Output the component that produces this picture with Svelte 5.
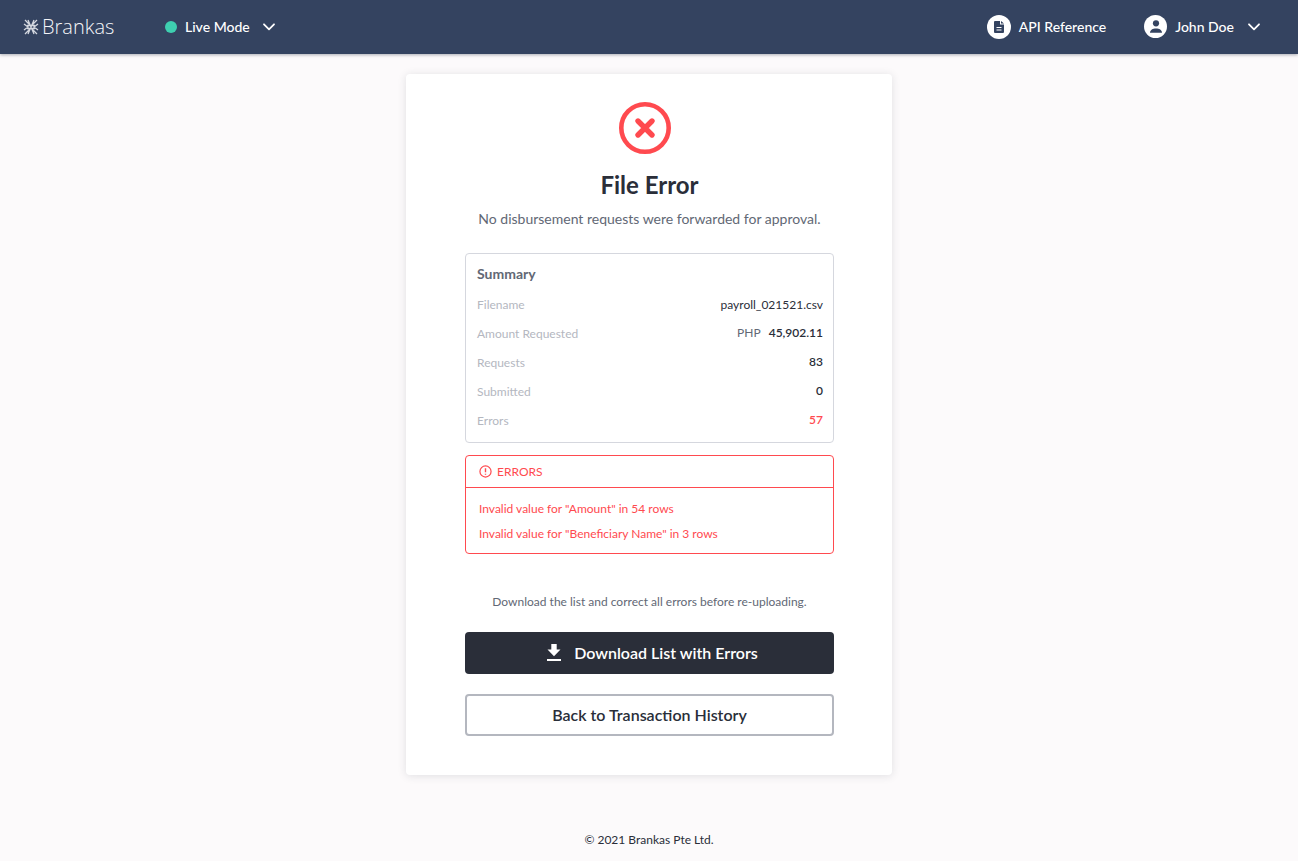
<script>
  const rows = [
    { label: 'Filename', value: 'payroll_021521.csv', kind: 'plain' },
    { label: 'Amount Requested', value: '45,902.11', prefix: 'PHP', kind: 'bold' },
    { label: 'Requests', value: '83', kind: 'bold' },
    { label: 'Submitted', value: '0', kind: 'bold' },
    { label: 'Errors', value: '57', kind: 'bad' }
  ];
  const errors = [
    'Invalid value for "Amount" in 54 rows',
    'Invalid value for "Beneficiary Name" in 3 rows'
  ];
</script>

<header class="topbar">
  <div class="logo">
    <svg width="16" height="16" viewBox="0 0 16 16" fill="none" stroke="#d3d7df" stroke-width="1.3">
      <path d="M2 1l6 6 6-6M2 15l6-6 6 6M1 5l4 3-4 3M15 5l-4 3 4 3M5 1l6 14M11 1L5 15M4 6.500h8M4 9.500h8" />
    </svg>
    <span>Brankas</span>
  </div>
  <div class="mode">
    <span class="dot"></span>
    <span>Live Mode</span>
    <svg class="chev" width="12" height="8" viewBox="0 0 12 8" fill="none" stroke="#fff" stroke-width="1.8" stroke-linecap="round" stroke-linejoin="round"><path d="M1 1.3l5 5 5-5" /></svg>
  </div>
  <div class="spacer"></div>
  <div class="api">
    <span class="round">
      <svg width="10" height="12" viewBox="0 0 10 12"><path fill="#344360" fill-rule="evenodd" d="M1 0H6V3.500H10V11A1 1 0 0 1 9 12H1A1 1 0 0 1 0 11V1A1 1 0 0 1 1 0ZM2.500 6v1h5V6ZM2.500 8.500v1h5v-1ZM7 0l3 2.600H7Z" /></svg>
    </span>
    <span>API Reference</span>
  </div>
  <div class="user">
    <span class="round">
      <svg width="14" height="13" viewBox="0 0 14 13" fill="#344360"><circle cx="7" cy="3.300" r="3.100" /><path d="M1 12.800c0-2.900 2.800-4.300 6-4.300s6 1.400 6 4.300z" /></svg>
    </span>
    <span>John Doe</span>
    <svg class="chev" width="12" height="8" viewBox="0 0 12 8" fill="none" stroke="#fff" stroke-width="1.8" stroke-linecap="round" stroke-linejoin="round"><path d="M1 1.3l5 5 5-5" /></svg>
  </div>
</header>

<main class="page">
  <section class="card">
    <svg class="status" width="54" height="54" viewBox="0 0 54 54" fill="none" stroke="#ff4a4f">
      <circle cx="27" cy="27" r="23.700" stroke-width="4.600" />
      <path d="M20 20l14 14M34 20L20 34" stroke-width="5.400" stroke-linecap="round" />
    </svg>
    <h1>File Error</h1>
    <p class="lead">No disbursement requests were forwarded for approval.</p>

    <div class="summary">
      <h2>Summary</h2>
      {#each rows as row}
        <div class="row">
          <span class="label">{row.label}</span>
          <span class="value {row.kind}">
            {#if row.prefix}<span class="prefix">{row.prefix}</span>{/if}{row.value}
          </span>
        </div>
      {/each}
    </div>

    <div class="errors">
      <div class="errors-head">
        <svg width="13" height="13" viewBox="0 0 14 14" fill="none" stroke="#ff4a4f" stroke-width="1.3">
          <circle cx="7" cy="7" r="6" />
          <path d="M7 3.600v4.200M7 9.300v1.100" stroke-width="1.500" />
        </svg>
        <span>ERRORS</span>
      </div>
      <div class="errors-body">
        {#each errors as e}
          <div>{e}</div>
        {/each}
      </div>
    </div>

    <p class="hint">Download the list and correct all errors before re-uploading.</p>

    <button class="btn primary">
      <svg width="16" height="18" viewBox="0 0 16 18" fill="#fff"><path d="M5.300 0h5.400v5.500h3.800L8 12.200 1.500 5.500h3.800z" /><rect x="1" y="15" width="14" height="2" /></svg>
      <span>Download List with Errors</span>
    </button>
    <button class="btn ghost">Back to Transaction History</button>
  </section>
</main>

<footer class="foot">© 2021 Brankas Pte Ltd.</footer>

<style>
  :global(body) {
    margin: 0;
    background: #fcfafb;
    font-family: Lato, "Liberation Sans", sans-serif;
  }

  .topbar {
    height: 54px;
    box-sizing: border-box;
    display: flex;
    align-items: center;
    padding: 0 38px 1px 23px;
    background: #344360;
    color: #fff;
    box-shadow: 0 1px 3px rgba(20, 28, 45, 0.35);
  }

  .logo {
    display: flex;
    align-items: center;
    gap: 3px;
    width: 142px;
    font-family: "Open Sans", sans-serif;
    font-size: 20px;
    color: #f4f5f8;
  }

  .logo span { font-weight: 300; }

  .mode {
    display: flex;
    align-items: center;
    font-size: 14px;
    font-weight: 500;
  }

  .dot {
    width: 12px;
    height: 12px;
    border-radius: 50%;
    background: #3ecfb0;
    margin-right: 8px;
  }

  .chev { margin-left: 13px; }
  .user .chev { margin-left: 6px; }

  .spacer { flex: 1; }

  .api, .user {
    display: flex;
    align-items: center;
    gap: 8px;
    font-size: 14px;
    font-weight: 500;
  }

  .api { margin-right: 38px; }

  .round {
    width: 24px;
    height: 24px;
    border-radius: 50%;
    background: #fff;
    display: flex;
    align-items: center;
    justify-content: center;
  }

  .user .round {
    width: 23px;
    height: 23px;
  }

  .page {
    display: flex;
    justify-content: center;
    padding-top: 20px;
  }

  .card {
    width: 486px;
    height: 701px;
    box-sizing: border-box;
    padding: 27px 58px 0 59px;
    background: #fff;
    border-radius: 4px;
    box-shadow: 0 1px 8px rgba(40, 45, 60, 0.13);
    display: flex;
    flex-direction: column;
    align-items: center;
  }

  .status {
    display: block;
    margin-left: -10px;
  }

  h1 {
    margin: 14px 0 0;
    font-size: 24px;
    line-height: 32px;
    font-weight: 700;
    color: #2a2e39;
  }

  .lead {
    margin: 8px 0 0;
    font-size: 14px;
    line-height: 20px;
    color: #626875;
  }

  .summary {
    width: 100%;
    box-sizing: border-box;
    margin-top: 24px;
    height: 190px;
    padding: 10px 10px 0 11px;
    border: 1px solid #d5d7de;
    border-radius: 4px;
  }

  h2 {
    margin: 0 0 6px;
    font-size: 14px;
    line-height: 20px;
    font-weight: 700;
    color: #626875;
  }

  .row {
    height: 29px;
    display: flex;
    align-items: center;
    justify-content: space-between;
    font-size: 12px;
  }

  .label { color: #b4b7bf; }

  .value { color: #2a2e39; }
  .value.bold { font-weight: 600; padding-bottom: 2px; }
  .value.bad { color: #ff4a4f; font-weight: 600; padding-bottom: 2px; }

  .prefix {
    font-weight: 400;
    color: #626875;
    margin-right: 8px;
  }

  .errors {
    width: 100%;
    box-sizing: border-box;
    margin-top: 12px;
    border: 1px solid #ff4a4f;
    border-radius: 4px;
    color: #ff4a4f;
    font-size: 12px;
  }

  .errors-head {
    height: 31px;
    display: flex;
    align-items: center;
    gap: 5px;
    padding-left: 13px;
    border-bottom: 1px solid #ff4a4f;
  }

  .errors-body {
    height: 65px;
    padding: 12px 13px 0;
    box-sizing: border-box;
    display: flex;
    flex-direction: column;
    gap: 7px;
    line-height: 18px;
  }

  .hint {
    margin: 39px 0 0;
    font-size: 12px;
    line-height: 18px;
    color: #626875;
  }

  .btn {
    width: 100%;
    box-sizing: border-box;
    display: flex;
    align-items: center;
    justify-content: center;
    font-family: inherit;
    font-size: 16px;
    font-weight: 600;
    border-radius: 4px;
    padding: 0 0 2px;
  }

  .primary {
    height: 42px;
    margin-top: 21px;
    padding-left: 5px;
    gap: 12px;
    background: #2a2e39;
    color: #fff;
    border: none;
  }

  .primary svg { margin-top: 2px; }

  .ghost {
    height: 42px;
    margin-top: 20px;
    background: #fff;
    color: #2a2e39;
    border: 2px solid #b4b7bf;
  }

  .foot {
    margin-top: 56px;
    text-align: center;
    font-size: 12px;
    line-height: 18px;
    color: #2a2e39;
  }
</style>
